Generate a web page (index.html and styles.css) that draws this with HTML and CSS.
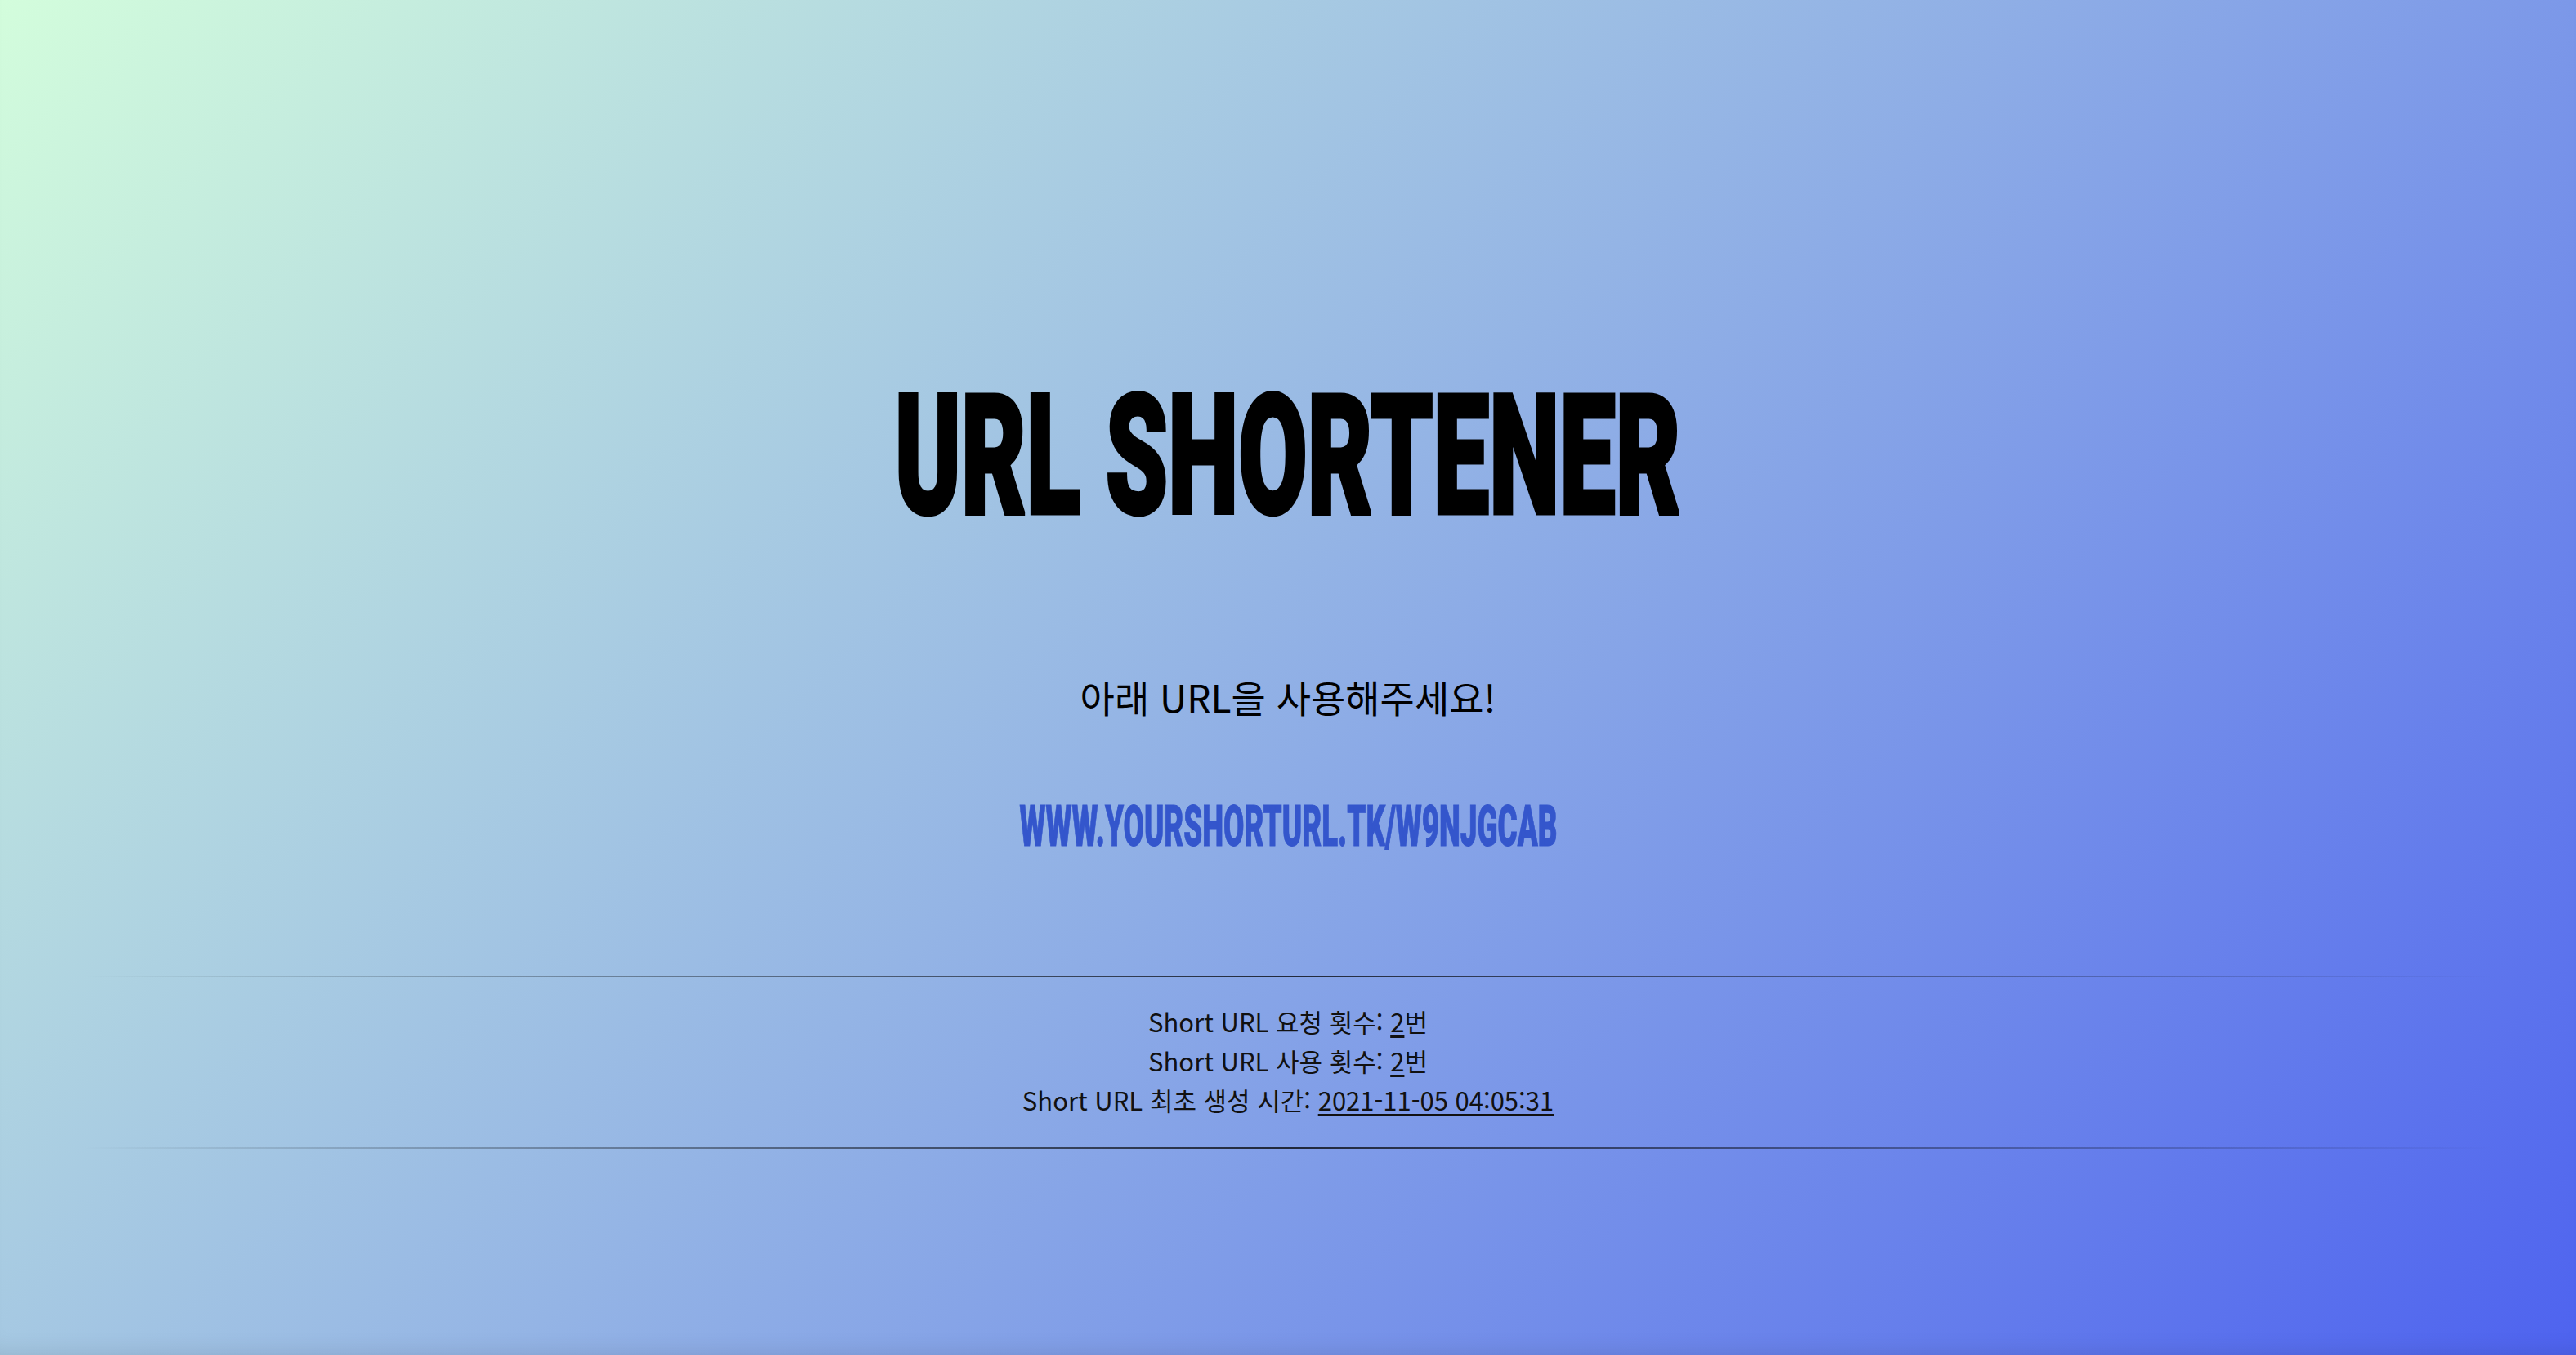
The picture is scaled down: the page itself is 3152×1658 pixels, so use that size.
FILE: index.html
```html
<!DOCTYPE html>
<html lang="ko">
<head>
<meta charset="utf-8">
<title>URL Shortener</title>
<link rel="stylesheet" href="styles.css">
</head>
<body>
  <main class="page">
    <h1 class="title"><span class="title-text">URL SHORTENER</span></h1>
    <p class="subtitle">아래 URL을 사용해주세요!</p>
    <div class="short-url-row"><a class="short-url" href="#"><span class="short-url-text">WWW.YOURSHORTURL.TK/W9NJGCAB</span></a></div>
    <hr class="divider">
    <div class="stats">
      <p class="stat">Short URL 요청 횟수: <u>2</u>번</p>
      <p class="stat">Short URL 사용 횟수: <u>2</u>번</p>
      <p class="stat">Short URL 최초 생성 시간: <u>2021-11-05 04:05:31</u></p>
    </div>
    <hr class="divider">
  </main>
</body>
</html>
```

FILE: styles.css
```css
html, body {
  margin: 0;
  padding: 0;
}
body {
  min-height: 100vh;
  background: linear-gradient(135deg, #d3fddc 0%, #4e63ef 100%);
  font-family: "Noto Sans CJK KR", "Noto Sans", sans-serif;
  color: #000;
  overflow: hidden;
}
.page {
  min-height: 100vh;
  box-sizing: border-box;
  padding-top: 456px;
  text-align: center;
  box-shadow: inset 0 -24px 30px -24px rgba(0, 0, 0, 0.12);
}
.title {
  margin: 0;
  font-family: Roboto, "Liberation Sans", sans-serif;
  font-weight: 900;
  font-size: 205px;
  line-height: 205px;
  height: 205px;
}
.title-text {
  display: inline-block;
  transform: scaleX(0.597);
  transform-origin: center;
  white-space: nowrap;
  -webkit-text-stroke: 5px #000;
}
.subtitle {
  margin: 158px 0 0;
  font-size: 46px;
  line-height: 66px;
  height: 66px;
}
.short-url-row {
  margin-top: 91px;
  height: 70px;
  line-height: 70px;
}
.short-url {
  font-family: Roboto, "Liberation Sans", sans-serif;
  font-weight: 900;
  font-size: 70px;
  color: #3456cc;
  text-decoration: none;
}
.short-url-text {
  display: inline-block;
  transform: scaleX(0.525);
  white-space: nowrap;
  -webkit-text-stroke: 1px #3456cc;
}
.divider {
  border: 0;
  height: 2px;
  margin: 0 100px;
  background: linear-gradient(to right, rgba(0,0,0,0), rgba(0,0,0,0.75), rgba(0,0,0,0));
}
.short-url-row + .divider {
  margin-top: 148px;
}
.stats {
  padding: 30px 0 34px;
}
.stat {
  margin: 0;
  font-size: 31px;
  line-height: 48px;
  color: #111;
}
.stat u {
  text-underline-offset: 4px;
}
```
